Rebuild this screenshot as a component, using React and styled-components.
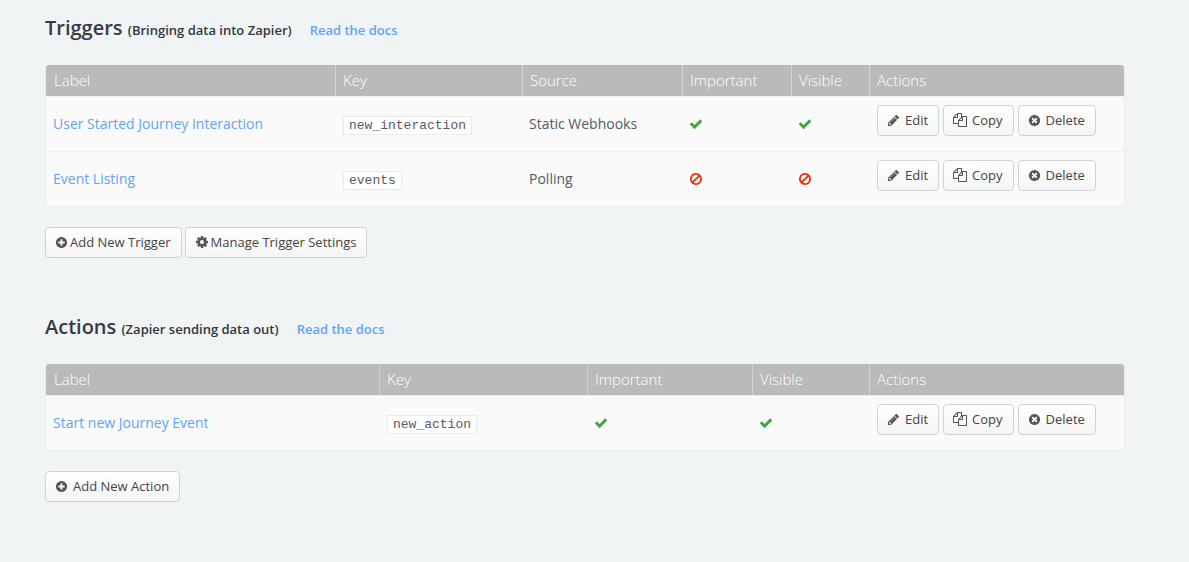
import React from "react";
import styled, { createGlobalStyle } from "styled-components";

const GlobalStyle = createGlobalStyle`
  * { box-sizing: border-box; }
  body {
    margin: 0;
    background: #f0f4f5;
    color: #555b60;
    font: 14px/20px "Open Sans", "Noto Sans", sans-serif;
  }
`;

const Page = styled.main`
  padding: 13px 64px 40px 45px;
`;

const Section = styled.section`
  margin-bottom: 54px;

  &:last-child { margin-bottom: 0; }
`;

const SectionHeader = styled.header`
  display: flex;
  align-items: baseline;
  gap: 18px;
  margin-bottom: 20px;
`;

const Title = styled.h2`
  margin: 0;
  color: #353b44;
  font-size: 20px;
  line-height: 30px;
  font-weight: 600;
`;

const Subtitle = styled.small`
  color: #33373c;
  font-size: 13px;
`;

const TextLink = styled.a`
  color: #61a5f5;
  font-size: ${(p) => (p.$strong ? "13px" : "14px")};
  font-weight: ${(p) => (p.$strong ? 600 : 400)};
  text-decoration: none;
`;

const Table = styled.table`
  width: 100%;
  table-layout: fixed;
  border-collapse: separate;
  border-spacing: 0;
  border: 1px solid #ebedee;
  border-top: 0;
  border-radius: 4px;
  background: #fafafa;
  overflow: hidden;
`;

const Column = styled.col`
  width: ${(p) => (p.$width ? `${p.$width}px` : "auto")};
`;

const HeadCell = styled.th`
  height: 31px;
  padding: 0 7px 1px;
  background: #bababa;
  border-left: 1px solid #d2d2d2;
  color: #fff;
  font-size: 15px;
  font-weight: 300;
  text-align: left;

  &:first-child { border-left-color: #bababa; }
`;

const Cell = styled.td`
  height: 55px;
  padding: 0 7px;
  border-top: 1px solid #ebedee;
  vertical-align: middle;
`;

const CodeCell = styled(Cell)`
  padding: 1px 8px 0;
`;

const ActionsCell = styled(Cell)`
  padding: 8px 8px 0;
  vertical-align: top;
`;

const Code = styled.code`
  display: inline-block;
  padding: 0 5px;
  background: #fff;
  border: 1px solid #e8eaeb;
  font: 13px/17px "Courier New", "Liberation Mono", monospace;
  vertical-align: middle;
`;

const ButtonRow = styled.div`
  display: flex;
  gap: ${(p) => p.$gap || 4}px;
`;

const Button = styled.button`
  display: inline-flex;
  align-items: center;
  gap: ${(p) => (p.$tight ? 2 : 5)}px;
  height: 31px;
  padding: 0 10px 1px 9px;
  border: 1px solid #d0d2d3;
  border-radius: 4px;
  background: linear-gradient(#fff, #f4f4f4);
  color: #444;
  font: 13px/20px "Open Sans", "Noto Sans", sans-serif;
  white-space: nowrap;
  cursor: pointer;
`;

const Glyph = styled.svg`
  display: block;
  flex: none;
  width: ${(p) => p.$size}px;
  height: ${(p) => p.$size}px;
  fill: ${(p) => p.$color || "#555"};
`;

const CIRCLE =
  "M1664 896q0 209-103 385.5t-279.5 279.5-385.5 103-385.5-103-279.5-279.5-103-385.5 103-385.5 279.5-279.5 385.5-103 385.5 103 279.5 279.5 103 385.5z";

const PATHS = {
  check:
    "M1671 566q0 40-28 68l-724 724-136 136q-28 28-68 28t-68-28l-136-136-362-362q-28-28-28-68t28-68l136-136q28-28 68-28t68 28l294 295 656-657q28-28 68-28t68 28l136 136q28 28 28 68z",
  ban: "M1440 893q0-161-87-295l-754 753q137 89 297 89 111 0 211.5-43.5t173.5-116.5 116-174.5 43-212.5zm-999 299l755-754q-135-91-300-91-148 0-273 73t-198 199-73 274q0 162 89 299zm1223-299q0 157-61 300t-163.5 246-245 164-298.5 61-298.5-61-245-164-163.5-246-61-300 61-299.5 163.5-245.5 245-164 298.5-61 298.5 61 245 164 163.5 245.5 61 299.5z",
  pencil:
    "M491 1536l91-91-235-235-91 91v107h128v128h107zm523-928q0-22-22-22-10 0-17 7l-542 542q-7 7-7 17 0 22 22 22 10 0 17-7l542-542q7-7 7-17zm-54-192l416 416-832 832h-416v-416zm683 96q0 53-37 90l-166 166-416-416 166-165q36-38 90-38 53 0 91 38l235 234q37 39 37 91z",
  copy: "M1696 384q40 0 68 28t28 68v1216q0 40-28 68t-68 28h-960q-40 0-68-28t-28-68v-288h-544q-40 0-68-28t-28-68v-672q0-40 20-88t48-76l408-408q28-28 76-48t88-20h416q40 0 68 28t28 68v328q68-40 128-40h416zm-544 213l-299 299h299v-299zm-640-384l-299 299h299v-299zm196 647l316-316v-416h-384v416q0 40-28 68t-68 28h-416v640h512v-256q0-40 20-88t48-76zm956 804v-1152h-384v416q0 40-28 68t-68 28h-416v640h896z",
  remove:
    "M1277 1122q0-26-19-45l-181-181 181-181q19-19 19-45 0-27-19-46l-90-90q-19-19-46-19-26 0-45 19l-181 181-181-181q-19-19-45-19-27 0-46 19l-90 90q-19 19-19 46 0 26 19 45l181 181-181 181q-19 19-19 45 0 27 19 46l90 90q19 19 46 19 26 0 45-19l181-181 181 181q19 19 45 19 27 0 46-19l90-90q19-19 19-46z" +
    CIRCLE,
  plus:
    "M1344 960v-128q0-26-19-45t-45-19h-256v-256q0-26-19-45t-45-19h-128q-26 0-45 19t-19 45v256h-256q-26 0-45 19t-19 45v128q0 26 19 45t45 19h256v256q0 26 19 45t45 19h128q26 0 45-19t19-45v-256h256q26 0 45-19t19-45z" +
    CIRCLE,
  cog: "M1152 896q0-106-75-181t-181-75-181 75-75 181 75 181 181 75 181-75 75-181zm512-109v222q0 12-8 23t-20 13l-185 28q-19 54-39 91 35 50 107 138 10 12 10 25t-9 23q-27 37-99 108t-94 71q-12 0-26-9l-138-108q-44 23-91 38-16 136-29 186-7 28-36 28h-222q-14 0-24.5-8.5t-11.5-21.5l-28-184q-49-16-90-37l-141 107q-10 9-25 9-14 0-25-11-126-114-165-168-7-10-7-23 0-12 8-23 15-21 51-66.5t54-70.5q-27-50-41-99l-183-27q-13-2-21-12.5t-8-23.5v-222q0-12 8-23t19-13l186-28q14-46 39-92-40-57-107-138-10-12-10-24 0-10 9-23 26-36 98.5-107.5t94.5-71.5q13 0 26 10l138 107q44-23 91-38 16-136 29-186 7-28 36-28h222q14 0 24.5 8.5t11.5 21.5l28 184q49 16 90 37l142-107q9-9 24-9 13 0 25 10 129 119 165 170 7 8 7 22 0 12-8 23-15 21-51 66.5t-54 70.5q26 50 41 98l183 28q13 2 21 12.5t8 23.5z",
};

function Icon({ name, color, size = 13 }) {
  return (
    <Glyph viewBox="0 0 1792 1792" $color={color} $size={size} fillRule="evenodd" aria-hidden="true">
      <path d={PATHS[name]} />
    </Glyph>
  );
}

function Flag({ on }) {
  return on ? (
    <Icon name="check" size={14} color="#41a547" />
  ) : (
    <Icon name="ban" size={14} color="#e52e06" />
  );
}

function RowActions() {
  return (
    <ButtonRow>
      <Button type="button"><Icon name="pencil" />Edit</Button>
      <Button type="button"><Icon name="copy" size={14} />Copy</Button>
      <Button type="button"><Icon name="remove" />Delete</Button>
    </ButtonRow>
  );
}

function ItemTable({ columns, rows }) {
  return (
    <Table>
      <colgroup>
        {columns.map((c) => <Column key={c.name} $width={c.width} />)}
      </colgroup>
      <thead>
        <tr>{columns.map((c) => <HeadCell key={c.name} scope="col">{c.name}</HeadCell>)}</tr>
      </thead>
      <tbody>
        {rows.map((row) => (
          <tr key={row.key}>
            <Cell><TextLink href="#">{row.label}</TextLink></Cell>
            <CodeCell><Code>{row.key}</Code></CodeCell>
            {row.source && <Cell>{row.source}</Cell>}
            <Cell><Flag on={row.important} /></Cell>
            <Cell><Flag on={row.visible} /></Cell>
            <ActionsCell><RowActions /></ActionsCell>
          </tr>
        ))}
      </tbody>
    </Table>
  );
}

const Footer = styled.footer`
  margin-top: 20px;
`;

function Heading({ title, note }) {
  return (
    <SectionHeader>
      <Title>{title} <Subtitle>{note}</Subtitle></Title>
      <TextLink href="#" $strong>Read the docs</TextLink>
    </SectionHeader>
  );
}

const triggerColumns = [
  { name: "Label" },
  { name: "Key", width: 187 },
  { name: "Source", width: 160 },
  { name: "Important", width: 109 },
  { name: "Visible", width: 78 },
  { name: "Actions", width: 255 },
];

const triggers = [
  { label: "User Started Journey Interaction", key: "new_interaction", source: "Static Webhooks", important: true, visible: true },
  { label: "Event Listing", key: "events", source: "Polling", important: false, visible: false },
];

const actionColumns = [
  { name: "Label" },
  { name: "Key", width: 208 },
  { name: "Important", width: 165 },
  { name: "Visible", width: 117 },
  { name: "Actions", width: 255 },
];

const actions = [
  { label: "Start new Journey Event", key: "new_action", important: true, visible: true },
];

export default function App() {
  return (
    <>
      <GlobalStyle />
      <Page>
        <Section>
          <Heading title="Triggers" note="(Bringing data into Zapier)" />
          <ItemTable columns={triggerColumns} rows={triggers} />
          <Footer>
            <ButtonRow $gap={3}>
              <Button type="button" $tight><Icon name="plus" />Add New Trigger</Button>
              <Button type="button" $tight><Icon name="cog" size={14} />Manage Trigger Settings</Button>
            </ButtonRow>
          </Footer>
        </Section>
        <Section>
          <Heading title="Actions" note="(Zapier sending data out)" />
          <ItemTable columns={actionColumns} rows={actions} />
          <Footer>
            <ButtonRow $gap={3}>
              <Button type="button"><Icon name="plus" />Add New Action</Button>
            </ButtonRow>
          </Footer>
        </Section>
      </Page>
    </>
  );
}
